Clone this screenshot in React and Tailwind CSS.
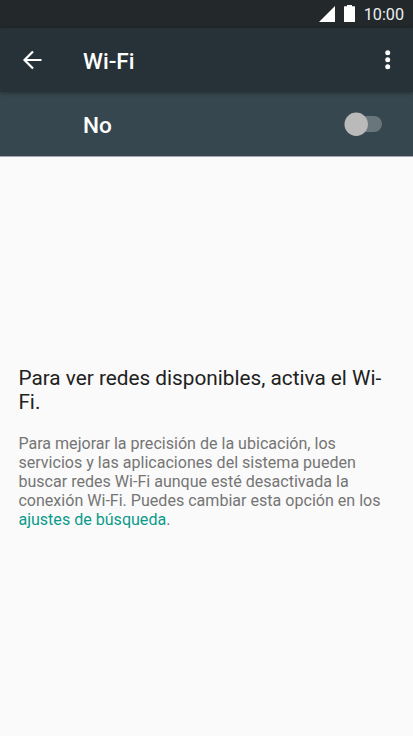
const StatusBar = () => (
  <div className="flex h-7 items-center justify-end bg-[#23282b] pr-[9px] text-[#eceff1]">
    <svg viewBox="0 0 16 16" className="h-4 w-4" fill="#fff">
      <path d="M16 0v16H0z" />
    </svg>
    <svg viewBox="0 0 11 17" className="-mt-px ml-[9px] h-[17px] w-[11px]" fill="#fff">
      <path d="M3 0h5v1.200H10.500a.5.5 0 0 1 .5.5V16.500a.5.5 0 0 1-.5.5H.5a.5.5 0 0 1-.5-.5V1.700a.5.5 0 0 1 .5-.5H3z" />
    </svg>
    <span className="ml-[9px] pt-px text-[16.2px] leading-7">10:00</span>
  </div>
);

const AppBar = () => (
  <header className="relative flex h-16 items-center bg-[#263238] text-white shadow-[0_1px_4px_rgba(0,0,0,0.35)]">
    <button className="ml-[22px] h-5 w-5" aria-label="Atrás">
      <svg viewBox="0 0 20 20" className="h-5 w-5" fill="none" stroke="currentColor" strokeWidth="2.2">
        <path d="M19.500 10H2.800M11 1.500L2.500 10l8.500 8.500" />
      </svg>
    </button>
    <h1 className="ml-[41px] pt-[3px] text-[22.6px] font-medium">Wi-Fi</h1>
    <button className="mr-[13px] ml-auto h-6 w-6" aria-label="Más opciones">
      <svg viewBox="0 0 24 24" className="h-6 w-6" fill="currentColor">
        <circle cx="11.700" cy="4.800" r="2.500" />
        <circle cx="11.700" cy="11.800" r="2.500" />
        <circle cx="11.700" cy="18.700" r="2.500" />
      </svg>
    </button>
  </header>
);

const SwitchBar = () => (
  <div className="flex h-[65px] items-center border-b border-[#a3a6b0] bg-[#37474f] pr-[31px] pl-[83px] text-white">
    <span className="pt-[4px] text-[22.6px] font-medium">No</span>
    <svg viewBox="0 0 38 24" className="ml-auto h-6 w-[38px]">
      <rect x="5" y="4" width="33" height="16" rx="8" fill="#69777d" />
      <circle cx="12.200" cy="12.200" r="11.700" fill="#bababa" />
    </svg>
  </div>
);

export default function App() {
  return (
    <div className="flex h-screen flex-col overflow-hidden bg-[#fafafa] font-['Roboto',sans-serif]">
      <StatusBar />
      <AppBar />
      <SwitchBar />
      <main className="flex-1 px-[18.400px] pt-[209px]">
        <h2 className="text-[20.78px] leading-6 whitespace-nowrap text-[#212121]">
          Para ver redes disponibles, activa el Wi-
          <br />
          Fi.
        </h2>
        <p className="mt-5 text-[16.07px] leading-[19px] whitespace-nowrap text-[#757575]">
          Para mejorar la precisión de la ubicación, los
          <br />
          servicios y las aplicaciones del sistema pueden
          <br />
          buscar redes Wi-Fi aunque esté desactivada la
          <br />
          conexión Wi-Fi. Puedes cambiar esta opción en los
          <br />
          <a className="text-[#0a9b8c]">ajustes de búsqueda</a>.
        </p>
      </main>
    </div>
  );
}
